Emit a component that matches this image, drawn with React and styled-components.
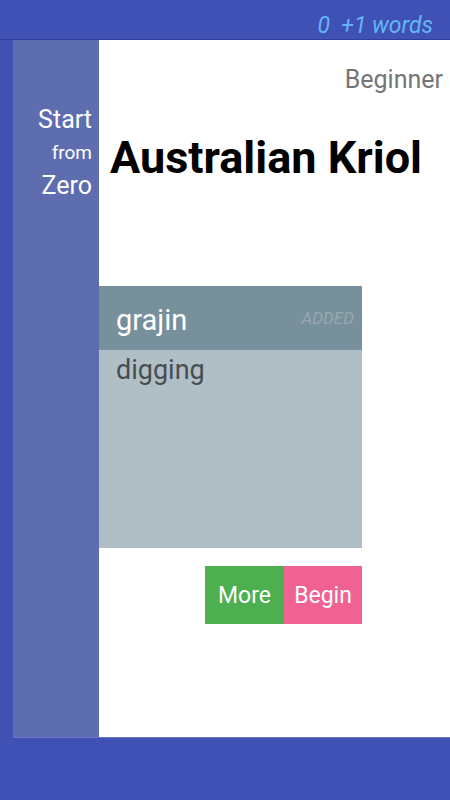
import React from "react";
import styled, { createGlobalStyle } from "styled-components";

const Global = createGlobalStyle`
  html, body { margin: 0; padding: 0; }
  body { font-family: Roboto, "Noto Sans", sans-serif; background: #3F51B5; }
  * { box-sizing: border-box; }
`;

const Screen = styled.div`
  width: 450px;
  height: 800px;
  background: #3F51B5;
  display: flex;
  flex-direction: column;
  overflow: hidden;
`;

const TopBar = styled.div`
  height: 40px;
  display: flex;
  align-items: center;
  justify-content: flex-end;
  padding: 12px 17px 0 0;
  border-bottom: 1px solid #2f3f9e;
`;

const Counter = styled.span`
  font-style: italic;
  font-size: 23px;
  color: #64B5F6;
  white-space: pre;
`;

const Main = styled.div`
  margin-left: 13px;
  height: 698px;
  display: flex;
  border-bottom: 1px solid #6a78c4;
`;

const Sidebar = styled.div`
  width: 86px;
  background: #5E6CB0;
  padding: 63px 7px 0 0;
  display: flex;
  flex-direction: column;
  align-items: flex-end;
`;

const SideWord = styled.div`
  color: #fff;
  font-size: ${(p) => (p.$small ? "19px" : "25px")};
  line-height: 33px;
`;

const Content = styled.div`
  flex: 1;
  background: #fff;
  display: flex;
  flex-direction: column;
`;

const Level = styled.div`
  margin-top: 26px;
  padding-right: 7px;
  text-align: right;
  font-size: 25px;
  line-height: 28px;
  color: #757575;
`;

const Title = styled.h1`
  margin: 38px 0 0 11px;
  font-size: 45px;
  line-height: 52px;
  font-weight: 700;
  color: #000;
`;

const Card = styled.div`
  margin-top: 102px;
  width: 263px;
  height: 262px;
  background: #B0BEC5;
  display: flex;
  flex-direction: column;
`;

const CardHeader = styled.div`
  height: 64px;
  background: #78909C;
  display: flex;
  align-items: center;
  justify-content: space-between;
  padding: 0 8px 0 17px;
`;

const Word = styled.span`
  font-size: 29px;
  color: #fff;
  padding-top: 4px;
`;

const Status = styled.span`
  font-size: 17px;
  font-style: italic;
  color: #98a8b1;
`;

const Meaning = styled.div`
  padding: 4px 17px 0;
  font-size: 27px;
  color: #474e52;
`;

const Actions = styled.div`
  margin-top: 18px;
  width: 263px;
  display: flex;
  justify-content: flex-end;
`;

const Button = styled.button`
  border: none;
  margin: 0;
  height: 58px;
  width: ${(p) => p.$w}px;
  background: ${(p) => p.$bg};
  color: #fff;
  font-family: Roboto, sans-serif;
  font-size: 23px;
  padding: 0;
  cursor: pointer;
`;

export default function App() {
  return (
    <>
      <Global />
      <Screen>
        <TopBar>
          <Counter>0  +1 words</Counter>
        </TopBar>
        <Main>
          <Sidebar>
            <SideWord>Start</SideWord>
            <SideWord $small>from</SideWord>
            <SideWord>Zero</SideWord>
          </Sidebar>
          <Content>
            <Level>Beginner</Level>
            <Title>Australian Kriol</Title>
            <Card>
              <CardHeader>
                <Word>grajin</Word>
                <Status>ADDED</Status>
              </CardHeader>
              <Meaning>digging</Meaning>
            </Card>
            <Actions>
              <Button $bg="#4CAF50" $w={79}>More</Button>
              <Button $bg="#F06292" $w={78}>Begin</Button>
            </Actions>
          </Content>
        </Main>
      </Screen>
    </>
  );
}
